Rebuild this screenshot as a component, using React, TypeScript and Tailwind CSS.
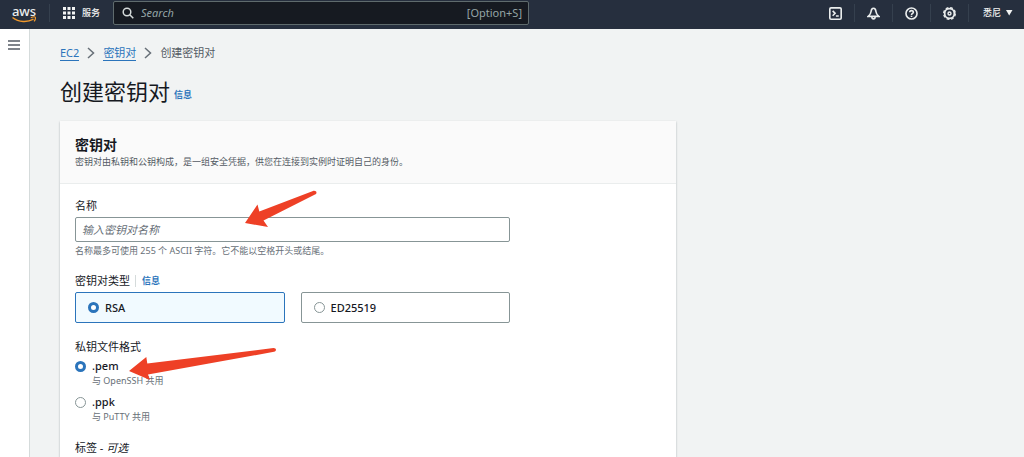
import { useState } from "react";
import type { ReactNode } from "react";

const keyTypes = ["RSA", "ED25519"];

const fileFormats = [
  { value: "pem", label: ".pem", hint: "与 OpenSSH 共用" },
  { value: "ppk", label: ".ppk", hint: "与 PuTTY 共用" },
];

const radioClass =
  "m-0 h-[11px] w-[11px] shrink-0 appearance-none rounded-full border border-[#879596] bg-white checked:border-3 checked:border-[#2b74bb]";

function NavIcon({ label, children }: { label: string; children: ReactNode }) {
  return (
    <button
      aria-label={label}
      className="flex h-[18px] w-[38px] items-center justify-center border-r border-[#35404e] text-[#eaeded]"
    >
      <svg
        viewBox="0 0 16 16"
        className="h-[13px] w-[13px]"
        fill="none"
        stroke="currentColor"
        strokeWidth="2"
      >
        {children}
      </svg>
    </button>
  );
}

function AwsLogo() {
  return (
    <a href="#" aria-label="aws" className="flex w-6 flex-col items-center pt-1">
      <span className="h-[9px] text-[13px] leading-[9px] font-medium text-[#eaeded]">
        aws
      </span>
      <svg viewBox="0 0 24 8" className="h-2 w-6" fill="none" stroke="#f0982c">
        <path d="M0.5 1.5C7 6.6 15.5 6.6 21.5 3.2" strokeWidth="1.5" />
        <path
          d="M18.8 1.7C21 0.8 23 0.8 23.3 1.3C23.6 2.2 23 4.2 22 5.3"
          strokeWidth="1.2"
        />
      </svg>
    </a>
  );
}

function TopNav() {
  return (
    <header className="flex h-[29px] shrink-0 items-start bg-[#262f3e] text-[#f2f3f3]">
      <div className="flex h-[26px] min-w-0 flex-1 items-center">
        <div className="flex h-[18px] w-[50px] shrink-0 items-center border-r border-[#35404e] pl-3">
          <AwsLogo />
        </div>
        <button className="flex h-6 shrink-0 items-center gap-[7px] px-[13px] text-[9px] leading-3 font-medium">
          <svg viewBox="0 0 12 12" className="h-3 w-3" fill="currentColor">
            {[0, 4.5, 9].map((y) =>
              [0, 4.5, 9].map((x) => (
                <rect key={`${x}-${y}`} x={x} y={y} width="3" height="3" />
              )),
            )}
          </svg>
          服务
        </button>
        <label className="flex h-6 w-[416px] min-w-0 items-center rounded-xs border border-[#5f6b6d] bg-[#161a21] pr-[6px] pl-2 text-[#95a5a6]">
          <svg
            viewBox="0 0 12 12"
            className="h-3 w-3 text-[#d5dbdb]"
            fill="none"
            stroke="currentColor"
            strokeWidth="1.5"
          >
            <circle cx="5" cy="5" r="3.8" />
            <path d="M7.8 7.8L11.3 11.3" />
          </svg>
          <input
            type="search"
            aria-label="Search"
            placeholder="Search"
            className="ml-[7px] min-w-0 flex-1 bg-transparent text-[11px] leading-4 outline-none placeholder:text-[#95a5a6] placeholder:italic"
          />
          <span className="text-[11px] leading-4">[Option+S]</span>
        </label>
      </div>
      <div className="flex h-[26px] items-center pr-[11px]">
        <NavIcon label="CloudShell">
          <rect x="1" y="1" width="14" height="14" rx="1.5" />
          <path d="M4.5 4.8L7.5 7.8L4.5 10.8M8.5 11H12" />
        </NavIcon>
        <NavIcon label="Notifications">
          <path d="M8 1.5C5.8 1.5 5.2 3.5 5 5.5C4.7 8.5 3.8 9.5 1.5 11.5H14.5C12.2 9.5 11.3 8.5 11 5.5C10.8 3.5 10.2 1.5 8 1.5Z" />
          <path d="M6 12C6 15.5 10 15.5 10 12" />
        </NavIcon>
        <NavIcon label="Help">
          <circle cx="8" cy="8" r="6.8" />
          <path d="M5.8 6.5C5.8 3.8 10.3 3.8 10.3 6.4C10.3 8 8 7.8 8 9.8M8 10.8V12.4" />
        </NavIcon>
        <NavIcon label="Settings">
          <circle cx="8" cy="8" r="6" strokeWidth="2.2" />
          <circle cx="8" cy="8" r="7.2" strokeWidth="1.6" strokeDasharray="3.4 2.25" />
          <circle cx="8" cy="8" r="1.8" strokeWidth="1.8" />
        </NavIcon>
        <button className="flex items-center gap-1 pl-[14px] text-[9px] leading-3 font-medium">
          悉尼
          <svg viewBox="0 0 8 8" className="h-2 w-2" fill="currentColor">
            <path d="M1 1H7.5L4.2 6.5Z" />
          </svg>
        </button>
      </div>
    </header>
  );
}

function Breadcrumbs() {
  const arrow = (
    <svg
      viewBox="0 0 8 12"
      className="h-3 w-2"
      fill="none"
      stroke="#687078"
      strokeWidth="1.5"
      aria-hidden="true"
    >
      <path d="M1 1L6.5 6L1 11" />
    </svg>
  );
  return (
    <nav className="flex h-4 items-center gap-2 text-[11px] leading-[14px] text-[#545b64]">
      <a href="#" className="border-b border-[#2b74bb] text-[#2b74bb]">
        EC2
      </a>
      {arrow}
      <a href="#" className="border-b border-[#2b74bb] text-[#2b74bb]">
        密钥对
      </a>
      {arrow}
      <span>创建密钥对</span>
    </nav>
  );
}

function InfoLink() {
  return (
    <a href="#" className="text-[9px] leading-3 font-bold text-[#2b74bb]">
      信息
    </a>
  );
}

export default function App() {
  const [keyType, setKeyType] = useState("RSA");
  const [format, setFormat] = useState("pem");

  return (
    <div className="flex h-screen flex-col overflow-hidden bg-[#f1f3f3] font-['Noto_Sans','Noto_Sans_CJK_SC',sans-serif] text-[#16191f]">
      <TopNav />
      <div className="flex min-h-0 flex-1">
        <aside className="w-[30px] shrink-0 border-r border-[#d5dbdb] bg-white">
          <button aria-label="Menu" className="mt-[11px] ml-2 block">
            <svg
              viewBox="0 0 12 10"
              className="h-[10px] w-3"
              stroke="#545b64"
              strokeWidth="1.5"
            >
              <path d="M0 1H12M0 5H12M0 9H12" />
            </svg>
          </button>
        </aside>
        <main className="flex min-w-0 flex-1 flex-col pt-4 pl-[30px]">
          <Breadcrumbs />
          <div className="my-4 flex h-7 items-center gap-1">
            <h1 className="text-[22px] leading-7">创建密钥对</h1>
            <span className="mt-2 flex">
              <InfoLink />
            </span>
          </div>

          <section className="w-[616px] max-w-full flex-1 bg-white shadow-[0_1px_2px_0_rgba(0,28,36,0.3)]">
            <div className="border-b border-[#eaeded] bg-[#fafafa] px-[15px] py-[14px]">
              <h2 className="text-[14px] leading-5 font-bold">密钥对</h2>
              <p className="text-[9px] leading-[14px] text-[#545b64]">
                密钥对由私钥和公钥构成，是一组安全凭据，供您在连接到实例时证明自己的身份。
              </p>
            </div>

            <form className="flex w-[465px] max-w-full flex-col gap-4 px-[15px] pt-[14px]">
              <div className="relative">
                <label htmlFor="key-name" className="block text-[11px] leading-4">
                  名称
                </label>
                <input
                  id="key-name"
                  placeholder="输入密钥对名称"
                  className="mt-[3px] block h-[25px] w-full rounded-xs border border-[#879596] bg-white px-[6px] text-[11px] outline-none placeholder:text-[#687078] placeholder:italic"
                />
                <p className="mt-[3px] text-[9px] leading-3 text-[#687078]">
                  名称最多可使用 255 个 ASCII 字符。它不能以空格开头或结尾。
                </p>
                <svg
                  viewBox="0 0 72 38"
                  className="pointer-events-none absolute -top-2 left-[170px] h-[38px] w-[72px]"
                  fill="#ee4026"
                  aria-hidden="true"
                >
                  <path d="M0 33L12.5 14.5L14.3 21.5L68 1C71 0.2 73 3 70 4.5L18.5 30.5L23 37Z" />
                </svg>
              </div>

              <fieldset>
                <legend className="flex items-center text-[11px] leading-4">
                  密钥对类型
                  <span className="ml-[5px] flex border-l border-[#d5dbdb] pl-[6px]">
                    <InfoLink />
                  </span>
                </legend>
                <div className="mt-[3px] grid grid-cols-2 gap-4">
                  {keyTypes.map((type) => (
                    <label
                      key={type}
                      className="flex h-[31px] items-center gap-[6px] rounded-xs border border-[#879596] bg-white px-3 text-[11px] leading-4 font-medium has-checked:border-[#2b74bb] has-checked:bg-[#f1faff]"
                    >
                      <input
                        type="radio"
                        name="key-type"
                        className={radioClass}
                        checked={keyType === type}
                        onChange={() => setKeyType(type)}
                      />
                      {type}
                    </label>
                  ))}
                </div>
              </fieldset>

              <div className="relative">
                <fieldset>
                  <legend className="text-[11px] leading-4">私钥文件格式</legend>
                  <div className="mt-[3px] flex flex-col gap-[6px]">
                    {fileFormats.map((item) => (
                      <label key={item.value} className="flex items-start gap-[6px]">
                        <span className="flex h-4 items-center">
                          <input
                            type="radio"
                            name="file-format"
                            className={radioClass}
                            checked={format === item.value}
                            onChange={() => setFormat(item.value)}
                          />
                        </span>
                        <span>
                          <span className="block text-[11px] leading-4 font-medium">
                            {item.label}
                          </span>
                          <span className="block text-[9px] leading-[14px] text-[#687078]">
                            {item.hint}
                          </span>
                        </span>
                      </label>
                    ))}
                  </div>
                </fieldset>
                <svg
                  viewBox="0 0 148 34"
                  className="pointer-events-none absolute top-2 left-[54px] h-[34px] w-[148px]"
                  fill="#ee4026"
                  aria-hidden="true"
                >
                  <path d="M0 24L17.3 10L18.3 16.5L144.5 1C147.5 1 148 4 145 4.8L19 27.5L21 33Z" />
                </svg>
              </div>

              <h3 className="text-[11px] leading-4">
                标签 - <i>可选</i>
              </h3>
            </form>
          </section>
        </main>
      </div>
    </div>
  );
}
